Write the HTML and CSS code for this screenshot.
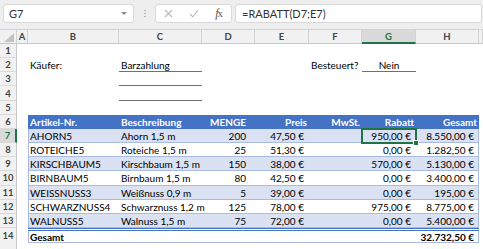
FILE: index.html
```html
<!DOCTYPE html>
<html>
<head>
<meta charset="utf-8">
<title>Rechnung mit Rabatt</title>
<link rel="stylesheet" href="styles.css">
</head>
<body>

<div class="toolbar">
  <div class="namebox"><span>G7</span><span class="caret"></span></div>
  <div class="grip"><i></i><i></i><i></i></div>
  <div class="fxbuttons">
    <svg width="9" height="9" viewBox="0 0 9 9"><path d="M1 1L8 8M8 1L1 8" stroke="#b9b9b9" stroke-width="1.1" fill="none"/></svg>
    <svg width="10" height="9" viewBox="0 0 10 9"><path d="M1 5L3.8 8L9 1" stroke="#b9b9b9" stroke-width="1.1" fill="none"/></svg>
    <span class="fx"><i>f</i>x</span>
  </div>
  <div class="formula">=RABATT(D7;E7)</div>
</div>

<div class="sheet">
  <div class="row colhead">
    <div class="corner"><svg width="10" height="9" viewBox="0 0 10 9"><polygon points="10,0 10,9 0,9" fill="#c3c3c3"/></svg></div>
    <div>A</div><div>B</div><div>C</div><div>D</div><div>E</div><div>F</div><div class="sel">G</div><div>H</div><div></div>
  </div>

  <div class="row"><div class="rh">1</div></div>

  <div class="row">
    <div class="rh">2</div><div></div>
    <div class="c">Käufer:</div>
    <div class="c line">Barzahlung</div>
    <div></div><div></div>
    <div class="c">Besteuert?</div>
    <div class="c line mid">Nein</div>
  </div>

  <div class="row"><div class="rh">3</div><div></div><div></div><div class="line"></div></div>
  <div class="row"><div class="rh">4</div><div></div><div></div><div class="line"></div></div>
  <div class="row"><div class="rh">5</div></div>

  <div class="row">
    <div class="rh">6</div><div></div>
    <div class="tbl head">
      <div class="c">Artikel-Nr.</div><div class="c">Beschreibung</div>
      <div class="c r qty">MENGE</div><div class="c r">Preis</div><div class="c r">MwSt.</div>
      <div class="c r">Rabatt</div><div class="c r">Gesamt</div>
    </div>
  </div>

  <div class="row">
    <div class="rh sel">7</div><div></div>
    <div class="tbl band">
      <div class="c">AHORN5</div><div class="c">Ahorn 1,5 m</div>
      <div class="c r qty">200</div><div class="c r eur">47,50 €</div><div class="c"></div>
      <div class="c r eur active">950,00 €<span class="handle"></span></div><div class="c r eur">8.550,00 €</div>
    </div>
  </div>

  <div class="row">
    <div class="rh">8</div><div></div>
    <div class="tbl">
      <div class="c">ROTEICHE5</div><div class="c">Roteiche 1,5 m</div>
      <div class="c r qty">25</div><div class="c r eur">51,30 €</div><div class="c"></div>
      <div class="c r eur">0,00 €</div><div class="c r eur">1.282,50 €</div>
    </div>
  </div>

  <div class="row">
    <div class="rh">9</div><div></div>
    <div class="tbl band">
      <div class="c">KIRSCHBAUM5</div><div class="c">Kirschbaum 1,5 m</div>
      <div class="c r qty">150</div><div class="c r eur">38,00 €</div><div class="c"></div>
      <div class="c r eur">570,00 €</div><div class="c r eur">5.130,00 €</div>
    </div>
  </div>

  <div class="row">
    <div class="rh">10</div><div></div>
    <div class="tbl">
      <div class="c">BIRNBAUM5</div><div class="c">Birnbaum 1,5 m</div>
      <div class="c r qty">80</div><div class="c r eur">42,50 €</div><div class="c"></div>
      <div class="c r eur">0,00 €</div><div class="c r eur">3.400,00 €</div>
    </div>
  </div>

  <div class="row">
    <div class="rh">11</div><div></div>
    <div class="tbl band">
      <div class="c">WEISSNUSS3</div><div class="c">Weißnuss 0,9 m</div>
      <div class="c r qty">5</div><div class="c r eur">39,00 €</div><div class="c"></div>
      <div class="c r eur">0,00 €</div><div class="c r eur">195,00 €</div>
    </div>
  </div>

  <div class="row">
    <div class="rh">12</div><div></div>
    <div class="tbl">
      <div class="c">SCHWARZNUSS4</div><div class="c">Schwarznuss 1,2 m</div>
      <div class="c r qty">125</div><div class="c r eur">78,00 €</div><div class="c"></div>
      <div class="c r eur">975,00 €</div><div class="c r eur">8.775,00 €</div>
    </div>
  </div>

  <div class="row">
    <div class="rh">13</div><div></div>
    <div class="tbl band">
      <div class="c">WALNUSS5</div><div class="c">Walnuss 1,5 m</div>
      <div class="c r qty">75</div><div class="c r eur">72,00 €</div><div class="c"></div>
      <div class="c r eur">0,00 €</div><div class="c r eur">5.400,00 €</div>
    </div>
  </div>

  <div class="row">
    <div class="rh">14</div><div></div>
    <div class="tbl total">
      <div class="c">Gesamt</div><div></div><div></div><div></div><div></div><div></div>
      <div class="c r eur">32.732,50 €</div>
    </div>
  </div>

  <div class="row"><div class="rh"></div></div>
</div>

</body>
</html>
```

FILE: styles.css
```css
body {
  margin: 0;
  width: 483px;
  height: 249px;
  overflow: hidden;
  background: white;
  font-family: Lato, "Liberation Sans", sans-serif;
  color: black;
}

/* formula bar */

.toolbar {
  display: flex;
  align-items: flex-start;
  height: 30px;
  box-sizing: border-box;
  padding: 4px 1px 0 3px;
  background: #eeeeee;
  border-bottom: 1px solid #d4d4d4;
}

.namebox, .fxbuttons, .formula {
  height: 19px;
  box-sizing: border-box;
  background: white;
  border: 1px solid #d9d9d9;
  border-radius: 3px;
  display: flex;
  align-items: center;
  font-size: 11px;
  color: #333;
}

.namebox {
  width: 131px;
  padding: 0 6px 0 5px;
  justify-content: space-between;
}

.caret {
  width: 0;
  height: 0;
  border-left: 3px solid transparent;
  border-right: 3px solid transparent;
  border-top: 3px solid #8a8a8a;
}

.grip {
  width: 21px;
  height: 19px;
  display: flex;
  flex-direction: column;
  align-items: center;
  justify-content: center;
  gap: 2px;
}

.grip i {
  width: 2px;
  height: 1px;
  background: #b5b5b5;
}

.fxbuttons {
  width: 77px;
  padding: 0 9px 0 8px;
  justify-content: space-between;
}

.fx {
  font-family: "Liberation Serif", serif;
  font-size: 11px;
  color: #555;
  letter-spacing: -1px;
}

.fx i {
  font-size: 12px;
}

.formula {
  flex: 1;
  margin-left: 3px;
  padding-left: 6px;
}

/* grid */

.row {
  display: grid;
  grid-template-columns: 17px 11px 91px 83px 53px 54px 53px 54px 63px 1fr;
  height: 14.17px;
  font-size: 10px;
}

.colhead {
  height: 14px;
  background: #f1f1f1;
  border-bottom: 1px solid #c8c8c8;
  box-sizing: border-box;
}

.colhead div {
  display: flex;
  align-items: center;
  justify-content: center;
  border-right: 1px solid #d2d2d2;
  font-size: 9.5px;
  font-weight: bold;
  color: #444;
}

.colhead .corner {
  justify-content: flex-end;
  align-items: flex-end;
  padding: 0 2px 1px 0;
}

.colhead .sel {
  background: #d9d9d9;
  color: #217346;
  border-bottom: 2px solid #217346;
  margin-bottom: -1px;
}

.rh {
  display: flex;
  align-items: center;
  justify-content: center;
  background: #f1f1f1;
  border-right: 1px solid #c8c8c8;
  border-bottom: 1px solid #dadada;
  box-sizing: border-box;
  font-size: 9.5px;
  font-weight: bold;
  color: #444;
}

.rh.sel {
  background: #d9d9d9;
  color: #217346;
  border-right: 2px solid #217346;
}

.c {
  display: flex;
  align-items: center;
  padding: 0 2px;
  white-space: nowrap;
}

.r {
  justify-content: flex-end;
}

.mid {
  justify-content: center;
}

.line {
  border-bottom: 1px solid #707070;
  box-sizing: border-box;
}

/* table */

.tbl {
  grid-column: 3 / 10;
  display: grid;
  grid-template-columns: 91px 83px 53px 54px 53px 54px 63px;
  box-shadow: inset 1px 0 0 #a8bbe3, inset -1px 0 0 #a8bbe3, inset 0 -1px 0 #a8bbe3;
}

.tbl.head {
  background: #4472c4;
  color: white;
  font-weight: bold;
  box-shadow: none;
}

.tbl.band {
  background: #d9e1f2;
}

.tbl.total {
  font-weight: bold;
  border-top: 3px double #4472c4;
}

.qty {
  padding-right: 9px;
}

.eur {
  padding-right: 5px;
}

.active {
  position: relative;
}

.active::after {
  content: "";
  position: absolute;
  top: -1px;
  left: -1px;
  right: -1px;
  bottom: -1px;
  border: 2px solid #217346;
}

.handle {
  position: absolute;
  right: -3px;
  bottom: -3px;
  width: 4px;
  height: 4px;
  background: #217346;
  border: 1px solid white;
  z-index: 1;
}
```
